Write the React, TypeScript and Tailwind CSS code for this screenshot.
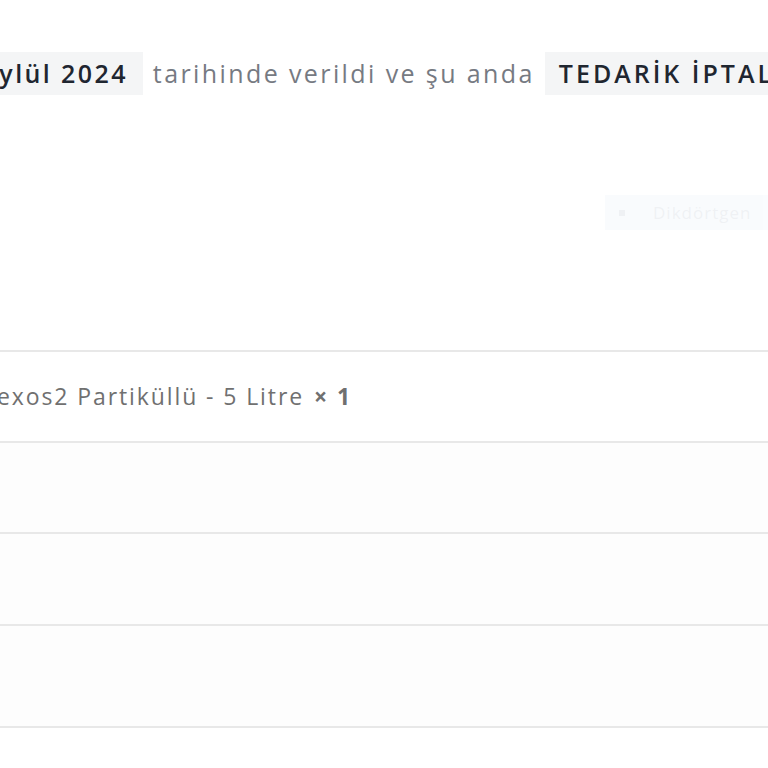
export default function App() {
  return (
    <div className="w-[768px] h-[768px] overflow-hidden bg-white font-['Open_Sans',sans-serif]">
      {/* order status sentence */}
      <div className="pt-[52px] flex items-center whitespace-nowrap text-[25px] leading-[43px] tracking-[2.4px]">
        <mark className="bg-[#f4f5f6] text-[#1f2630] font-semibold pr-[15px] -ml-[17px]">Eylül 2024</mark>
        <span className="text-[#767a82] px-[10px]">tarihinde verildi ve şu anda</span>
        <mark className="bg-[#f4f5f6] text-[#1f2630] font-semibold tracking-[3px] px-[14px]">TEDARİK İPTAL EDİLDİ</mark>
      </div>

      {/* faded shape tooltip */}
      <div className="mt-[100px] flex justify-end opacity-10">
        <div className="w-[163px] h-[35px] bg-[#cfe0f5] flex items-center gap-[28px] pl-[14px]">
          <span className="w-[6px] h-[6px] bg-[#6a7f9a]" />
          <span className="text-[17px] tracking-[1px] text-[#6a7f9a]">Dikdörtgen</span>
        </div>
      </div>

      {/* order items table */}
      <div className="mt-[120px] border-t-2 border-[#e8e8e8]">
        <div className="h-[91px] flex items-center border-b-2 border-[#e8e8e8] whitespace-nowrap text-[23px] tracking-[1.9px] text-[#707070]">
          <span className="-ml-[3px]">exos2 Partiküllü - 5 Litre</span>
          <strong className="ml-[10px] font-bold text-[#707070]">× 1</strong>
        </div>
        <div className="h-[91px] border-b-2 border-[#e8e8e8] bg-[#fdfdfd]" />
        <div className="h-[92px] border-b-2 border-[#e8e8e8] bg-[#fdfdfd]" />
        <div className="h-[102px] border-b-2 border-[#e8e8e8] bg-[#fdfdfd]" />
      </div>
    </div>
  );
}
